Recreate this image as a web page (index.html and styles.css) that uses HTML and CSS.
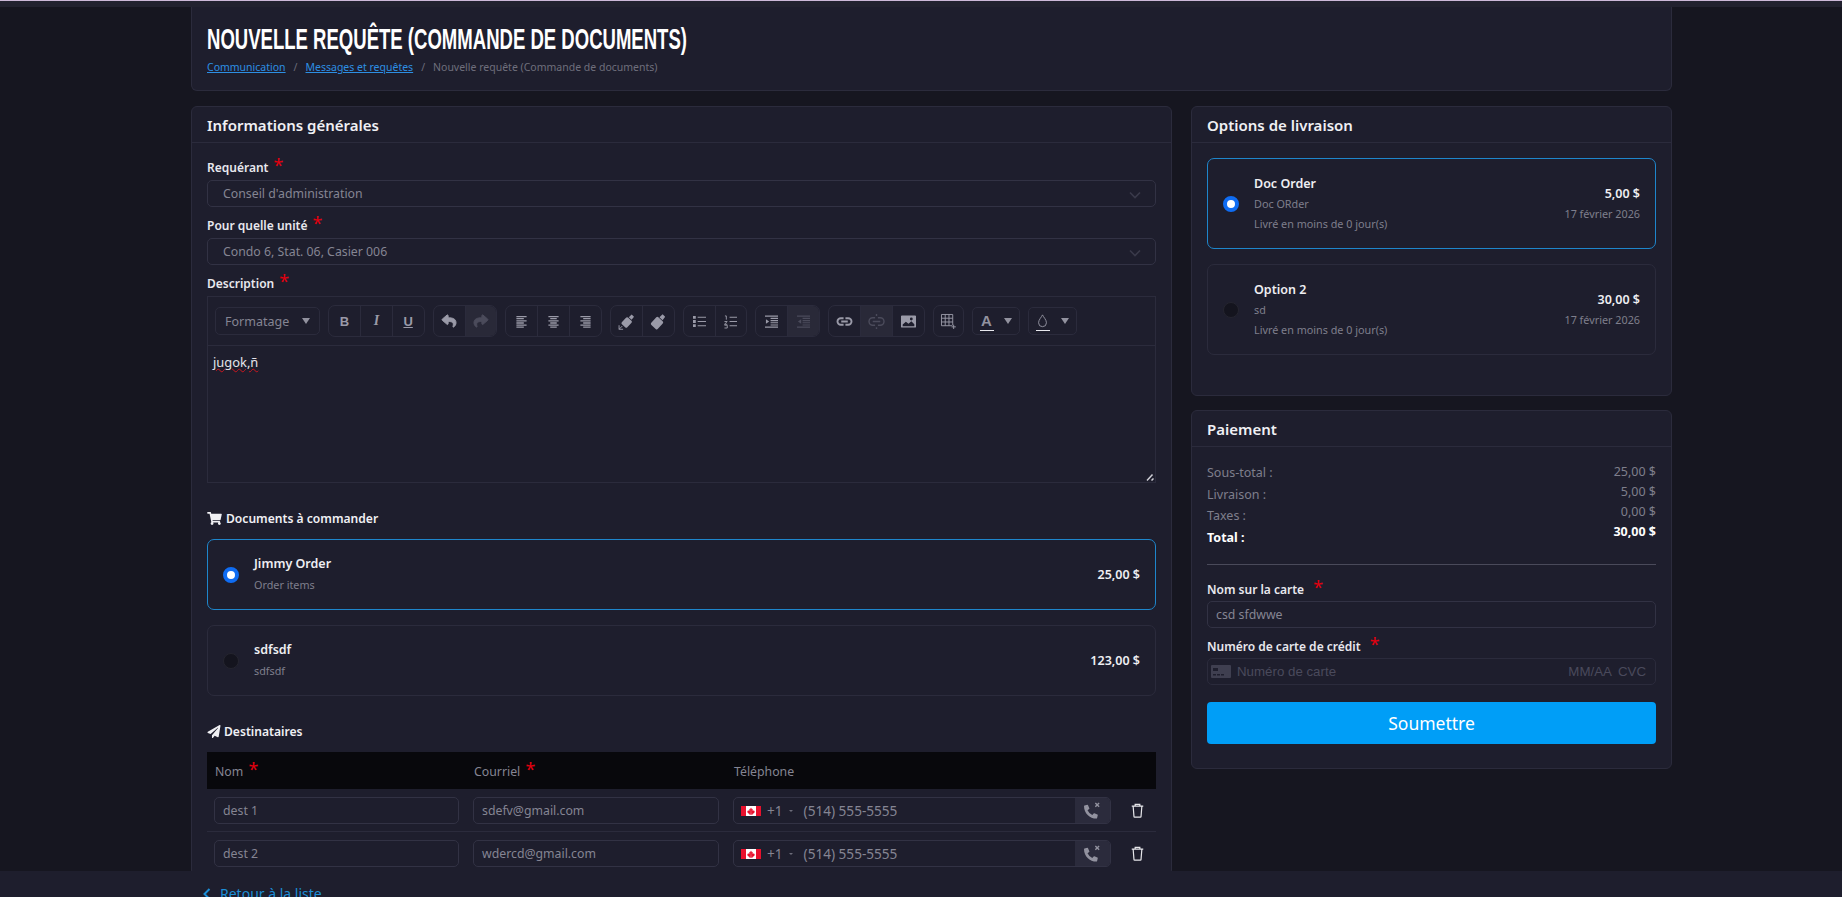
FILE: index.html
```html
<!DOCTYPE html>
<html lang="fr">
<head>
<meta charset="utf-8">
<title>Nouvelle requête (Commande de documents)</title>
<link rel="stylesheet" href="styles.css">
</head>
<body>
<div class="topbar"></div>
<main class="main">
  <header class="card page-head">
    <h1 class="title">NOUVELLE REQUÊTE (COMMANDE DE DOCUMENTS)</h1>
    <nav class="crumbs">
      <a href="#">Communication</a><span class="sep">/</span><a href="#">Messages et requêtes</a><span class="sep">/</span><span>Nouvelle requête (Commande de documents)</span>
    </nav>
  </header>
  <div class="columns">
    <section class="card">
      <h2 class="card-title">Informations générales</h2>
      <div class="card-body">
        <label class="label">Requérant <span class="star">*</span></label>
        <div class="field select">Conseil d'administration
          <svg class="chev" viewBox="0 0 12 8"><path d="M1 1.5l5 5 5-5" fill="none" stroke="#3a3a4a" stroke-width="1.6"/></svg>
        </div>
        <label class="label">Pour quelle unité <span class="star">*</span></label>
        <div class="field select">Condo 6, Stat. 06, Casier 006
          <svg class="chev" viewBox="0 0 12 8"><path d="M1 1.5l5 5 5-5" fill="none" stroke="#3a3a4a" stroke-width="1.6"/></svg>
        </div>
        <label class="label">Description <span class="star">*</span></label>
        <div class="editor">
          <div class="toolbar">
            <div class="tb-select fmt">Formatage<i class="caret"></i></div>
            <div class="group">
              <span class="btn glyph bold">B</span>
              <span class="btn glyph ital">I</span>
              <span class="btn glyph under">U</span>
            </div>
            <div class="group">
              <span class="btn"><svg class="ico wide" viewBox="0 0 512 512"><path fill="currentColor" stroke="currentColor" stroke-width="36" d="M8.31 189.9l176-151.1c15.4-13.3 39.7-2.5 39.7 18.2v79.6c160.6 1.8 288 34 288 186.3 0 61.4-39.6 122.3-83.3 154.1-13.7 9.9-33.1-2.5-28.1-18.6 45.3-145-21.5-183.5-176.6-185.8V360c0 20.7-24.3 31.5-39.7 18.2l-176-152c-11.1-9.6-11.1-26.7 0-36.3z"/></svg></span>
              <span class="btn off"><svg class="ico wide flip" viewBox="0 0 512 512"><path fill="currentColor" stroke="currentColor" stroke-width="36" d="M8.31 189.9l176-151.1c15.4-13.3 39.7-2.5 39.7 18.2v79.6c160.6 1.8 288 34 288 186.3 0 61.4-39.6 122.3-83.3 154.1-13.7 9.9-33.1-2.5-28.1-18.6 45.3-145-21.5-183.5-176.6-185.8V360c0 20.7-24.3 31.5-39.7 18.2l-176-152c-11.1-9.6-11.1-26.7 0-36.3z"/></svg></span>
            </div>
            <div class="group">
              <span class="btn"><svg class="ico" viewBox="0 0 14 14"><path stroke="currentColor" stroke-width="1.4" d="M1.5 1.7h11M1.5 4h8M1.5 6.3h11M1.5 8.6h8M1.5 10.9h11M1.5 13h8"/></svg></span>
              <span class="btn"><svg class="ico" viewBox="0 0 14 14"><path stroke="currentColor" stroke-width="1.4" d="M1.5 1.7h11M3.5 4h7M1.5 6.3h11M3.5 8.6h7M1.5 10.9h11M3.5 13h7"/></svg></span>
              <span class="btn"><svg class="ico" viewBox="0 0 14 14"><path stroke="currentColor" stroke-width="1.4" d="M1.5 1.7h11M4.5 4h8M1.5 6.3h11M4.5 8.6h8M1.5 10.9h11M4.5 13h8"/></svg></span>
            </div>
            <div class="group">
              <span class="btn"><svg class="ico brush" viewBox="0 0 16 16"><g transform="rotate(42 9 8)"><rect x="5.5" y="5" width="7" height="8.5" rx="1.3" fill="currentColor"/><path fill="currentColor" d="M7.2 4.3L7.5.6h3l.3 3.700z"/></g><path fill="none" stroke="currentColor" stroke-width=".9" d="M1 11.500v3.800h3.800M1 15.300l3-3"/></svg></span>
              <span class="btn"><svg class="ico brush" viewBox="0 0 16 16"><g transform="rotate(42 8 8)"><rect x="3.800" y="5.200" width="8.400" height="9.800" rx="1.500" fill="currentColor"/><path fill="currentColor" d="M6 4.500L6.400.4h3.200l.4 4.100z"/></g></svg></span>
            </div>
            <div class="group">
              <span class="btn"><svg class="ico" viewBox="0 0 14 14"><path fill="currentColor" d="M0 1h3v3H0zM0 5.500h3v3H0zM0 10h3v3H0z"/><path stroke="currentColor" stroke-width="1.100" d="M5 2.500h9M5 7h9M5 11.500h9"/></svg></span>
              <span class="btn"><svg class="ico" viewBox="0 0 14 14"><path stroke="currentColor" stroke-width="1.100" d="M6 2.500h8M6 7h8M6 11.500h8"/><path fill="none" stroke="currentColor" d="M1 1h1.500v4M.5 7h3l-3 3h3M.5 11h3v3h-3"/></svg></span>
            </div>
            <div class="group">
              <span class="btn"><svg class="ico" viewBox="0 0 14 14"><path stroke="currentColor" stroke-width="1.200" d="M0 1.200h14M6 3.600h8M6 6h8M6 8.400h8M6 10.800h8M0 13h14"/><path fill="currentColor" d="M1 4.500v5L4.500 7z"/></svg></span>
              <span class="btn off"><svg class="ico" viewBox="0 0 14 14"><path stroke="currentColor" stroke-width="1.200" d="M0 1.200h14M6 3.600h8M6 6h8M6 8.400h8M6 10.800h8M0 13h14"/><path fill="currentColor" d="M4.500 4.500v5L1 7z"/></svg></span>
            </div>
            <div class="group">
              <span class="btn"><svg class="ico big" viewBox="0 0 16 10"><path fill="none" stroke="currentColor" stroke-width="2" d="M7 1.500H4a3.500 3.500 0 0 0 0 7h3M9 1.500h3a3.500 3.500 0 0 1 0 7H9M4.500 5h7"/></svg></span>
              <span class="btn off"><svg class="ico big" viewBox="0 0 16 16"><path fill="none" stroke="currentColor" stroke-width="1.500" d="M6.500 4H4a3.500 3.500 0 0 0 0 8h2.500M9.500 4H12a3.500 3.500 0 0 1 0 8H9.500M4 8h8M8 0v2M8 14v2"/></svg></span>
              <span class="btn"><svg class="ico big" viewBox="0 0 16 13"><path fill="currentColor" fill-rule="evenodd" d="M1 0h14a1 1 0 0 1 1 1v11a1 1 0 0 1-1 1H1a1 1 0 0 1-1-1V1a1 1 0 0 1 1-1zm.8 11.500h12.400V9.400L11 6.200 8 9 5.200 6.800 1.800 9.600zM11 2.300a1.500 1.500 0 1 0 0 3 1.500 1.500 0 0 0 0-3z"/></svg></span>
            </div>
            <div class="group">
              <span class="btn solo"><svg class="ico big" viewBox="0 0 16 16"><path fill="none" stroke="currentColor" d="M.5.500h12v12H.5zM4.500.500v12M8.500.500v12M.5 4.500h12M.5 8.500h12"/><path stroke="#1e1e2d" stroke-width="3" d="M13.500 12v5M11 14.500h5"/><path stroke="currentColor" d="M13.500 11.500v4.500M11.200 13.700h4.600"/></svg></span>
            </div>
            <div class="tb-select color"><span class="swatch a">A</span><i class="caret"></i></div>
            <div class="tb-select color"><span class="swatch"><svg class="drop" viewBox="0 0 12 16"><path fill="none" stroke="currentColor" stroke-width="1.100" d="M6 1c1 2.500 4.500 5.500 4.500 9a4.500 4.500 0 0 1-9 0C1.500 6.500 5 3.500 6 1z"/></svg></span><i class="caret"></i></div>
          </div>
          <div class="editor-body">
            <span class="misspelled">jugok,ñ</span>
            <svg class="grip" viewBox="0 0 8 8"><path stroke="#cfcfd6" stroke-width="1.500" d="M1 7.500L6.500 1.500M5.500 7.500l2-2"/></svg>
          </div>
        </div>

        <h3 class="section"><svg class="sec-ico" viewBox="0 0 576 512"><path fill="currentColor" d="M528.12 301.319l47.273-208C578.806 78.301 567.391 64 551.99 64H159.208l-9.166-44.81C147.758 8.021 137.93 0 126.529 0H24C10.745 0 0 10.745 0 24v16c0 13.255 10.745 24 24 24h69.883l70.248 343.435C147.325 417.1 136 435.222 136 456c0 30.928 25.072 56 56 56s56-25.072 56-56c0-15.674-6.447-29.835-16.824-40h209.647C430.447 426.165 424 440.326 424 456c0 30.928 25.072 56 56 56s56-25.072 56-56c0-22.172-12.888-41.332-31.579-50.405l5.517-24.276c3.413-15.018-8.002-29.319-23.403-29.319H218.117l-6.545-32h293.145c11.206 0 20.92-7.754 23.403-18.681z"/></svg>Documents à commander</h3>
        <div class="option doc selected">
          <span class="radio on"></span>
          <div class="opt-text"><div class="opt-name">Jimmy Order</div><div class="opt-sub">Order items</div></div>
          <div class="opt-price">25,00 $</div>
        </div>
        <div class="option doc">
          <span class="radio"></span>
          <div class="opt-text"><div class="opt-name">sdfsdf</div><div class="opt-sub">sdfsdf</div></div>
          <div class="opt-price">123,00 $</div>
        </div>

        <h3 class="section dest"><svg class="sec-ico plane" viewBox="0 0 512 512"><path fill="currentColor" d="M476 3.2L12.5 270.6c-18.1 10.4-15.8 35.600 2.200 43.200L121 358.400l287.300-253.200c5.500-4.900 13.300 2.600 8.600 8.300L176 407v80.500c0 23.600 28.500 32.900 42.500 15.800L282 426l124.600 52.200c14.200 6 30.400-2.900 33-18.200l72-432C515 7.800 493.300-6.800 476 3.200z"/></svg>Destinataires</h3>
        <div class="table">
          <div class="thead">
            <div class="th">Nom <span class="star">*</span></div>
            <div class="th">Courriel <span class="star">*</span></div>
            <div class="th">Téléphone</div>
            <div class="th"></div>
          </div>
          <div class="tr">
            <div class="td"><div class="field">dest 1</div></div>
            <div class="td"><div class="field">sdefv@gmail.com</div></div>
            <div class="td"><div class="phone">
              <svg class="flag" viewBox="0 0 20 10"><path fill="#fff" d="M0 0h20v10H0z"/><path fill="#e8112d" d="M0 0h5v10H0zM15 0h5v10h-5zM10 1.500l1 1.700.8-.4-.3 2 1-.6.400.8 1-.2-.6 1.500.3.400-2.100 1.200.1.900H10.200z M10 1.500l-1 1.700-.8-.4.300 2-1-.6-.400.8-1-.2.600 1.500-.3.400 2.100 1.200-.1.900h1.400z"/></svg>
              <span class="dial">+1</span><i class="mini-caret"></i><span class="num">(514) 555-5555</span>
              <span class="phone-btn"><svg class="phone-ico" viewBox="0 0 18 18"><path fill="currentColor" transform="translate(0 3) scale(.0285)" d="M497.39 361.800l-112-48a24 24 0 0 0-28 6.900l-49.600 60.600A370.660 370.660 0 0 1 130.600 204.110l60.600-49.600a23.940 23.940 0 0 0 6.900-28l-48-112A24.160 24.160 0 0 0 122.600.610l-104 24A24 24 0 0 0 0 48c0 256.500 207.900 464 464 464a24 24 0 0 0 23.400-18.600l24-104a24.290 24.290 0 0 0-14.010-27.600z"/><path stroke="currentColor" stroke-width="1.500" d="M12 1l4 4M16 1l-4 4"/></svg></span>
            </div></div>
            <div class="td trash"><svg class="trash-ico" viewBox="0 0 14 16"><path fill="none" stroke="#e6e6ea" stroke-width="1.300" d="M.8 3.200h12.400M4.500 3V1.400h5V3M2.300 3.200l.9 11.300c0 .4.300.7.700.7h6.200c.4 0 .7-.3.700-.7l.9-11.300"/></svg></div>
          </div>
          <div class="tr">
            <div class="td"><div class="field">dest 2</div></div>
            <div class="td"><div class="field">wdercd@gmail.com</div></div>
            <div class="td"><div class="phone">
              <svg class="flag" viewBox="0 0 20 10"><path fill="#fff" d="M0 0h20v10H0z"/><path fill="#e8112d" d="M0 0h5v10H0zM15 0h5v10h-5zM10 1.500l1 1.700.8-.4-.3 2 1-.6.400.8 1-.2-.6 1.500.3.400-2.100 1.200.1.900H10.200z M10 1.500l-1 1.700-.8-.4.300 2-1-.6-.400.8-1-.2.600 1.500-.3.400 2.100 1.200-.1.900h1.400z"/></svg>
              <span class="dial">+1</span><i class="mini-caret"></i><span class="num">(514) 555-5555</span>
              <span class="phone-btn"><svg class="phone-ico" viewBox="0 0 18 18"><path fill="currentColor" transform="translate(0 3) scale(.0285)" d="M497.39 361.800l-112-48a24 24 0 0 0-28 6.900l-49.600 60.600A370.660 370.660 0 0 1 130.600 204.110l60.600-49.600a23.940 23.940 0 0 0 6.900-28l-48-112A24.160 24.160 0 0 0 122.600.610l-104 24A24 24 0 0 0 0 48c0 256.500 207.900 464 464 464a24 24 0 0 0 23.400-18.600l24-104a24.290 24.290 0 0 0-14.010-27.600z"/><path stroke="currentColor" stroke-width="1.500" d="M12 1l4 4M16 1l-4 4"/></svg></span>
            </div></div>
            <div class="td trash"><svg class="trash-ico" viewBox="0 0 14 16"><path fill="none" stroke="#e6e6ea" stroke-width="1.300" d="M.8 3.200h12.400M4.500 3V1.400h5V3M2.300 3.200l.9 11.300c0 .4.300.7.700.7h6.200c.4 0 .7-.3.700-.7l.9-11.300"/></svg></div>
          </div>
        </div>
      </div>
    </section>

    <div class="side">
      <section class="card">
        <h2 class="card-title">Options de livraison</h2>
        <div class="card-body ship">
          <div class="option ship-opt selected">
            <span class="radio on"></span>
            <div class="opt-text"><div class="opt-name">Doc Order</div><div class="opt-sub">Doc ORder</div><div class="opt-sub">Livré en moins de 0 jour(s)</div></div>
            <div class="opt-right"><div class="opt-price">5,00 $</div><div class="opt-sub">17 février 2026</div></div>
          </div>
          <div class="option ship-opt">
            <span class="radio"></span>
            <div class="opt-text"><div class="opt-name">Option 2</div><div class="opt-sub">sd</div><div class="opt-sub">Livré en moins de 0 jour(s)</div></div>
            <div class="opt-right"><div class="opt-price">30,00 $</div><div class="opt-sub">17 février 2026</div></div>
          </div>
        </div>
      </section>
      <section class="card">
        <h2 class="card-title">Paiement</h2>
        <div class="card-body pay">
          <div class="totals">
            <div class="tot-col left"><div>Sous-total :</div><div>Livraison :</div><div>Taxes :</div><div class="strong">Total :</div></div>
            <div class="tot-col right"><div>25,00 $</div><div>5,00 $</div><div>0,00 $</div><div class="strong">30,00 $</div></div>
          </div>
          <hr class="rule">
          <label class="label pay-label">Nom sur la carte <span class="star wide">*</span></label>
          <div class="field">csd sfdwwe</div>
          <label class="label pay-label">Numéro de carte de crédit <span class="star wide">*</span></label>
          <div class="field stripe">
            <svg class="card-ico" viewBox="0 0 20 13"><path fill="#3f3f50" d="M1 0h18a1 1 0 0 1 1 1v11a1 1 0 0 1-1 1H1a1 1 0 0 1-1-1V1a1 1 0 0 1 1-1z"/><path fill="#1e1e2d" d="M2 3h5v3H2zM2 9h3v1.500H2zM6 9h3v1.500H6zM10 9h3v1.500h-3z"/></svg>
            <span class="card-num">Numéro de carte</span><span class="card-exp">MM/AA</span><span class="card-cvc">CVC</span>
          </div>
          <button class="submit" type="button">Soumettre</button>
        </div>
      </section>
    </div>
  </div>
</main>
<footer class="footer">
  <a href="#" class="back"><svg class="back-ico" viewBox="0 0 8 12"><path fill="none" stroke="currentColor" stroke-width="2" d="M6.500 1L1.500 6l5 5"/></svg>Retour à la liste</a>
</footer>
</body>
</html>
```
FILE: styles.css
```css
* { box-sizing: border-box; }
html, body { margin: 0; height: 100%; }
body {
  height: 897px;
  overflow: hidden;
  display: flex;
  flex-direction: column;
  background: #161620;
  color: #92929f;
  font-family: "Noto Sans", "Liberation Sans", sans-serif;
  font-size: 12.3px;
}
a { color: #2d8fe3; }
.topbar {
  flex: none;
  height: 7px;
  background: #22222f;
  border-top: 1px solid #cdb9d8;
}
.main {
  flex: 1;
  min-height: 0;
  overflow: hidden;
  padding: 0 170px 0 191px;
}
.card {
  background: #1e1e2d;
  border: 1px solid #2b2b3c;
  border-radius: 6px;
}
.page-head {
  height: 84px;
  border-top: 0;
  border-radius: 0 0 6px 6px;
  padding: 13px 15px 0;
  margin-bottom: 15px;
}
.title {
  margin: 0;
  font-family: "Liberation Sans", sans-serif;
  font-weight: 700;
  font-size: 30px;
  line-height: 38px;
  color: #fff;
  white-space: nowrap;
  width: max-content;
  transform: scaleX(.618);
  transform-origin: left center;
}
.crumbs {
  margin-top: 1px;
  font-size: 10.5px;
  line-height: 16px;
  color: #6f6f7c;
}
.sep { margin: 0 8px; color: #6c6c7a; }
.columns {
  display: grid;
  grid-template-columns: 981px 481px;
  column-gap: 19px;
  align-items: start;
}
.card-title {
  margin: 0;
  height: 36px;
  padding: 0 15px;
  display: flex;
  align-items: center;
  font-size: 15px;
  font-weight: 600;
  color: #f0f0f4;
  border-bottom: 1px solid #2b2b3c;
}
.card-body { padding: 15px 15px 0; }
.label {
  display: block;
  height: 22px;
  line-height: 20px;
  font-size: 12px;
  font-weight: 600;
  color: #e8e8ee;
}
.star {
  color: #e3000f;
  font-size: 18px;
  font-weight: 400;
  line-height: 0;
  margin-left: 2px;
}
.star.wide { margin-left: 6px; }
.field {
  position: relative;
  display: flex;
  align-items: center;
  height: 27px;
  padding: 0 8px;
  margin-bottom: 9px;
  font-size: 12.3px;
  color: #858593;
  background: #1e1e2d;
  border: 1px solid #323244;
  border-radius: 5px;
}
.select { padding: 0 15px; }
.chev {
  position: absolute;
  right: 14px;
  top: 10px;
  width: 12px;
  height: 8px;
}
.editor {
  border: 1px solid #2b2b3c;
  height: 187px;
  margin-bottom: 25px;
}
.toolbar {
  display: flex;
  align-items: center;
  gap: 8px;
  height: 49px;
  padding-left: 7px;
  border-bottom: 1px solid #2b2b3c;
}
.tb-select {
  display: flex;
  align-items: center;
  height: 28px;
  border: 1px solid #2b2b3c;
  border-radius: 5px;
  color: #858593;
}
.fmt { width: 105px; padding: 0 9px; font-size: 12.5px; justify-content: space-between; }
.color { width: 48px; padding: 0 7px; justify-content: space-between; }
.color + .color { width: 49px; }
.caret {
  width: 0;
  height: 0;
  border-left: 4px solid transparent;
  border-right: 4px solid transparent;
  border-top: 6px solid #92929f;
}
.group {
  display: flex;
  height: 32px;
  border: 1px solid #2b2b3c;
  border-radius: 7px;
  overflow: hidden;
}
.btn {
  width: 31px;
  display: flex;
  align-items: center;
  justify-content: center;
  color: #9a9aa8;
  font-size: 12px;
}
.btn + .btn { width: 31.75px; border-left: 1px solid #2b2b3c; }
.btn.solo { width: 29px; }
.btn.off { background: #292938; color: #4b4b5b; }
.glyph { font-family: "Liberation Sans", sans-serif; }
.bold { font-weight: 700; font-size: 13px; }
.ital { font-style: italic; font-weight: 700; font-family: "Liberation Serif", serif; font-size: 14px; }
.under { font-weight: 700; text-decoration: underline; font-size: 13px; }
.ico { width: 13px; height: 13px; overflow: visible; }
.ico.big { width: 15px; height: 15px; }
.ico.wide { width: 14px; height: 14px; }
.ico.brush { width: 17px; height: 17px; }
.flip { transform: scaleX(-1); }
.swatch {
  display: flex;
  justify-content: center;
  align-items: center;
  width: 14px;
  height: 20px;
  border-bottom: 1px solid #e8e8ee;
  color: #92929f;
  font-family: "Liberation Sans", sans-serif;
  font-weight: 700;
  font-size: 15px;
}
.drop { width: 11px; height: 14px; }
.editor-body {
  position: relative;
  height: 136px;
  padding: 6px 5px;
  font-size: 12.9px;
  line-height: 20px;
  color: #e4e4ea;
}
.misspelled { text-decoration: underline wavy #c9161f 1.2px; text-underline-offset: 1px; }
.grip {
  position: absolute;
  right: 1px;
  bottom: 1px;
  width: 8px;
  height: 8px;
}
.section {
  margin: 0 0 11px;
  display: flex;
  align-items: center;
  height: 20px;
  font-size: 12.1px;
  font-weight: 600;
  color: #f0f0f4;
}
.sec-ico { width: 15px; height: 13px; margin-right: 4px; color: #f0f0f4; }
.plane { width: 14px; margin-right: 3px; }
.dest { margin: 25px 0 11px; }
.option {
  display: flex;
  align-items: center;
  padding: 0 15px;
  border: 1px solid #2b2b3c;
  border-radius: 7px;
}
.option.selected { border-color: #1e86cb; }
.doc { height: 71px; margin-bottom: 15px; }
.doc:last-of-type { margin-bottom: 0; }
.doc .opt-sub { margin-top: 1px; }
.ship-opt { height: 91px; margin-bottom: 15px; }
.radio {
  flex: none;
  width: 16px;
  height: 16px;
  margin-right: 15px;
  border-radius: 50%;
  background: #14141e;
  border: 1px solid #25252f;
}
.radio.on {
  background: #ffffff;
  border: 4.5px solid #0f6cf2;
}
.opt-text { flex: 1; }
.opt-name {
  font-size: 12.5px;
  font-weight: 600;
  line-height: 20px;
  color: #eeeef2;
}
.opt-sub {
  font-size: 10.8px;
  line-height: 20px;
  color: #7e7e8c;
}
.opt-price {
  font-size: 12.5px;
  font-weight: 600;
  line-height: 21px;
  color: #eeeef2;
}
.opt-right { text-align: right; }
.thead, .tr {
  display: grid;
  grid-template-columns: 259px 260px 392px 38px;
}
.thead {
  height: 37px;
  padding-top: 2px;
  background: #08080c;
  align-items: center;
}
.th {
  padding-left: 8px;
  line-height: 20px;
  color: #858593;
  font-size: 12.3px;
}
.tr {
  height: 43px;
  padding-top: 1px;
  align-items: center;
  border-bottom: 1px solid #2b2b3c;
}
.td { padding: 0 7px; }
.td .field { margin: 0; }
.phone {
  display: flex;
  align-items: center;
  height: 27px;
  padding-left: 7px;
  border: 1px solid #323244;
  border-radius: 5px;
  font-size: 13.6px;
  color: #858593;
  overflow: hidden;
}
.flag { width: 20px; height: 10px; margin-right: 6px; }
.mini-caret {
  width: 0;
  height: 0;
  margin: 0 11px 0 6px;
  border-left: 2px solid transparent;
  border-right: 2px solid transparent;
  border-top: 2px solid #6c6c7a;
}
.num { flex: 1; }
.phone-btn {
  width: 35px;
  height: 100%;
  display: flex;
  align-items: center;
  justify-content: center;
  background: #2b2b3c;
  color: #92929f;
}
.phone-ico { width: 17px; height: 17px; }
.trash { display: flex; justify-content: center; padding: 0; }
.trash-ico { width: 13px; height: 15px; }
.side { display: flex; flex-direction: column; gap: 14px; }
.ship { height: 252px; }
.pay { padding-top: 15px; padding-bottom: 24px; }
.totals {
  display: flex;
  justify-content: space-between;
  height: 102px;
  font-size: 12.5px;
}
.tot-col { color: #7e7e8c; }
.left div { line-height: 21.5px; }
.right { text-align: right; }
.right div { line-height: 20px; }
.strong { color: #fff; font-weight: 700; }
.rule {
  margin: 0 0 15px;
  border: 0;
  border-top: 1px solid #4a4a5a;
}
.pay-label { height: 20px; line-height: 20px; margin-bottom: 1px; }
.stripe {
  padding: 0 9px 0 3px;
  margin-bottom: 17px;
  font-family: "Liberation Sans", sans-serif;
  font-size: 13.3px;
  color: #4a4a5c;
  border-color: #2b2b3c;
}
.card-ico { width: 20px; height: 13px; margin-right: 6px; }
.card-num { flex: 1; }
.card-cvc { margin-left: 6px; }
.submit {
  display: block;
  width: 100%;
  height: 42px;
  border: 0;
  border-radius: 4px;
  background: #009ef7;
  color: #fff;
  font-family: inherit;
  font-size: 17.5px;
}
.footer {
  flex: none;
  height: 26px;
  background: #1e1e2d;
  overflow: hidden;
  padding: 13px 0 0 203px;
}
.back {
  display: flex;
  align-items: center;
  color: #1c8ed6;
  font-size: 14px;
  line-height: 20px;
  text-decoration: none;
}
.back-ico { width: 8px; height: 12px; margin-right: 9px; }
```
